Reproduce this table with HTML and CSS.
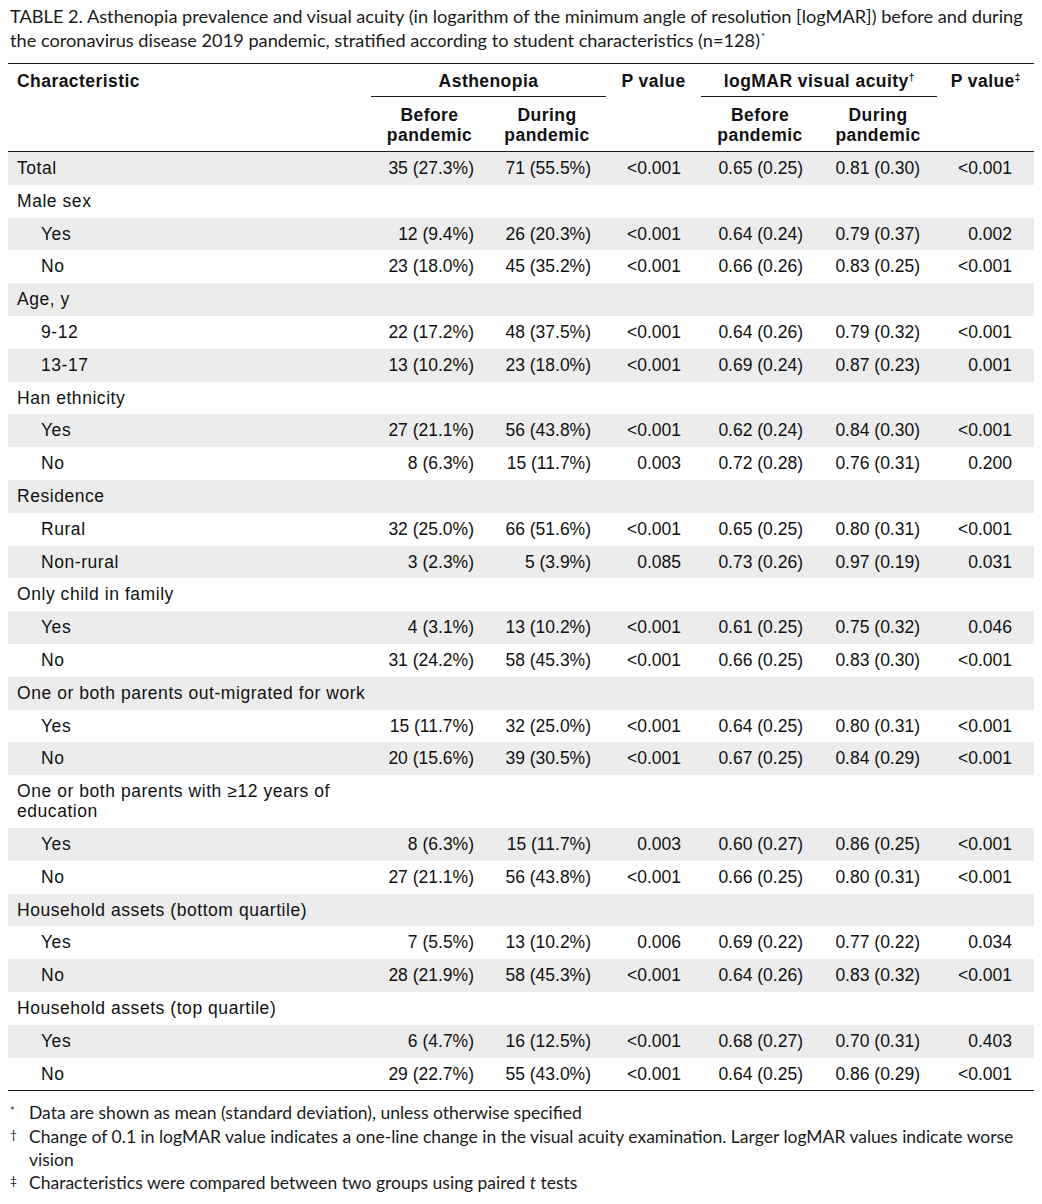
FILE: index.html
```html
<!DOCTYPE html>
<html lang="en">
<head>
<meta charset="utf-8">
<title>Table 2</title>
<link rel="stylesheet" href="styles.css">
</head>
<body>
<div class="page">
  <p class="caption">TABLE 2. Asthenopia prevalence and visual acuity (in logarithm of the minimum angle of resolution [logMAR]) before and during the coronavirus disease 2019 pandemic, stratified according to student characteristics (n=128)<span class="cap-sup">*</span></p>
  <table class="data">
    <colgroup>
      <col class="c1"><col class="c2"><col class="c3"><col class="c4"><col class="c5"><col class="c6"><col class="c7">
    </colgroup>
    <thead>
      <tr class="h1">
        <th rowspan="2" class="th-left">Characteristic</th>
        <th colspan="2" class="th-group">Asthenopia</th>
        <th rowspan="2" class="th-top">P value</th>
        <th colspan="2" class="th-group">logMAR visual acuity<sup class="mk">†</sup></th>
        <th rowspan="2" class="th-top">P value<sup class="mk">‡</sup></th>
      </tr>
      <tr class="h2">
        <th>Before<br>pandemic</th>
        <th>During<br>pandemic</th>
        <th>Before<br>pandemic</th>
        <th>During<br>pandemic</th>
      </tr>
    </thead>
    <tbody>
      <tr><td class="lab">Total</td><td>35 (27.3%)</td><td>71 (55.5%)</td><td>&lt;0.001</td><td>0.65 (0.25)</td><td>0.81 (0.30)</td><td>&lt;0.001</td></tr>
      <tr><td class="lab" colspan="7">Male sex</td></tr>
      <tr><td class="lab sub">Yes</td><td>12 (9.4%)</td><td>26 (20.3%)</td><td>&lt;0.001</td><td>0.64 (0.24)</td><td>0.79 (0.37)</td><td>0.002</td></tr>
      <tr><td class="lab sub">No</td><td>23 (18.0%)</td><td>45 (35.2%)</td><td>&lt;0.001</td><td>0.66 (0.26)</td><td>0.83 (0.25)</td><td>&lt;0.001</td></tr>
      <tr><td class="lab" colspan="7">Age, y</td></tr>
      <tr><td class="lab sub">9-12</td><td>22 (17.2%)</td><td>48 (37.5%)</td><td>&lt;0.001</td><td>0.64 (0.26)</td><td>0.79 (0.32)</td><td>&lt;0.001</td></tr>
      <tr><td class="lab sub">13-17</td><td>13 (10.2%)</td><td>23 (18.0%)</td><td>&lt;0.001</td><td>0.69 (0.24)</td><td>0.87 (0.23)</td><td>0.001</td></tr>
      <tr><td class="lab" colspan="7">Han ethnicity</td></tr>
      <tr><td class="lab sub">Yes</td><td>27 (21.1%)</td><td>56 (43.8%)</td><td>&lt;0.001</td><td>0.62 (0.24)</td><td>0.84 (0.30)</td><td>&lt;0.001</td></tr>
      <tr><td class="lab sub">No</td><td>8 (6.3%)</td><td>15 (11.7%)</td><td>0.003</td><td>0.72 (0.28)</td><td>0.76 (0.31)</td><td>0.200</td></tr>
      <tr><td class="lab" colspan="7">Residence</td></tr>
      <tr><td class="lab sub">Rural</td><td>32 (25.0%)</td><td>66 (51.6%)</td><td>&lt;0.001</td><td>0.65 (0.25)</td><td>0.80 (0.31)</td><td>&lt;0.001</td></tr>
      <tr><td class="lab sub">Non-rural</td><td>3 (2.3%)</td><td>5 (3.9%)</td><td>0.085</td><td>0.73 (0.26)</td><td>0.97 (0.19)</td><td>0.031</td></tr>
      <tr><td class="lab" colspan="7">Only child in family</td></tr>
      <tr><td class="lab sub">Yes</td><td>4 (3.1%)</td><td>13 (10.2%)</td><td>&lt;0.001</td><td>0.61 (0.25)</td><td>0.75 (0.32)</td><td>0.046</td></tr>
      <tr><td class="lab sub">No</td><td>31 (24.2%)</td><td>58 (45.3%)</td><td>&lt;0.001</td><td>0.66 (0.25)</td><td>0.83 (0.30)</td><td>&lt;0.001</td></tr>
      <tr><td class="lab" colspan="7">One or both parents out-migrated for work</td></tr>
      <tr><td class="lab sub">Yes</td><td>15 (11.7%)</td><td>32 (25.0%)</td><td>&lt;0.001</td><td>0.64 (0.25)</td><td>0.80 (0.31)</td><td>&lt;0.001</td></tr>
      <tr><td class="lab sub">No</td><td>20 (15.6%)</td><td>39 (30.5%)</td><td>&lt;0.001</td><td>0.67 (0.25)</td><td>0.84 (0.29)</td><td>&lt;0.001</td></tr>
      <tr><td class="lab">One or both parents with ≥12 years of education</td><td></td><td></td><td></td><td></td><td></td><td></td></tr>
      <tr><td class="lab sub">Yes</td><td>8 (6.3%)</td><td>15 (11.7%)</td><td>0.003</td><td>0.60 (0.27)</td><td>0.86 (0.25)</td><td>&lt;0.001</td></tr>
      <tr><td class="lab sub">No</td><td>27 (21.1%)</td><td>56 (43.8%)</td><td>&lt;0.001</td><td>0.66 (0.25)</td><td>0.80 (0.31)</td><td>&lt;0.001</td></tr>
      <tr><td class="lab" colspan="7">Household assets (bottom quartile)</td></tr>
      <tr><td class="lab sub">Yes</td><td>7 (5.5%)</td><td>13 (10.2%)</td><td>0.006</td><td>0.69 (0.22)</td><td>0.77 (0.22)</td><td>0.034</td></tr>
      <tr><td class="lab sub">No</td><td>28 (21.9%)</td><td>58 (45.3%)</td><td>&lt;0.001</td><td>0.64 (0.26)</td><td>0.83 (0.32)</td><td>&lt;0.001</td></tr>
      <tr><td class="lab" colspan="7">Household assets (top quartile)</td></tr>
      <tr><td class="lab sub">Yes</td><td>6 (4.7%)</td><td>16 (12.5%)</td><td>&lt;0.001</td><td>0.68 (0.27)</td><td>0.70 (0.31)</td><td>0.403</td></tr>
      <tr><td class="lab sub">No</td><td>29 (22.7%)</td><td>55 (43.0%)</td><td>&lt;0.001</td><td>0.64 (0.25)</td><td>0.86 (0.29)</td><td>&lt;0.001</td></tr>
    </tbody>
  </table>
  <ul class="notes">
    <li><span class="nm nm-star">*</span><span>Data are shown as mean (standard deviation), unless otherwise specified</span></li>
    <li><span class="nm">†</span><span>Change of 0.1 in logMAR value indicates a one-line change in the visual acuity examination. Larger logMAR values indicate worse vision</span></li>
    <li><span class="nm">‡</span><span>Characteristics were compared between two groups using paired <i>t</i> tests</span></li>
  </ul>
</div>
</body>
</html>
```
FILE: styles.css
```css
html, body {
  margin: 0;
  padding: 0;
  background: #ffffff;
  color: #111111;
}

.page {
  width: 1026px;
  padding: 0 8px;
}

.caption {
  margin: 4px 0 0 2px;
  font-family: "Lato", "Open Sans", sans-serif;
  font-size: 18.2px;
  line-height: 24px;
  color: #1a1a1a;
}

.cap-sup {
  display: inline-block;
  font-size: 10px;
  line-height: 10px;
  vertical-align: top;
  margin-left: 1px;
  margin-top: 3px;
}

.data {
  width: 1026px;
  margin-top: 11px;
  border-collapse: collapse;
  table-layout: fixed;
  font-family: "Liberation Sans", Arial, sans-serif;
  font-size: 17.5px;
  color: #111111;
}

.c1 { width: 363px; }
.c2 { width: 117px; }
.c3 { width: 118px; }
.c4 { width: 95px; }
.c5 { width: 118px; }
.c6 { width: 118px; }
.c7 { width: 97px; }

.data thead tr.h1 {
  border-top: 1px solid #1a1a1a;
}

.data thead tr.h2 {
  border-bottom: 1px solid #1a1a1a;
}

.data th {
  font-weight: bold;
  text-align: center;
  vertical-align: top;
  line-height: 20px;
  letter-spacing: 0.45px;
  padding: 0;
}

.h1 th {
  padding-top: 7px;
  padding-bottom: 5px;
}

.h1 th.th-left {
  text-align: left;
  padding-left: 9px;
}

.h1 th.th-group {
  border-bottom: 1px solid #1a1a1a;
}

.h2 th {
  padding-top: 8px;
  padding-bottom: 6px;
}

.mk {
  font-size: 10px;
  line-height: 0;
  vertical-align: 6px;
  letter-spacing: 0;
}

.data tbody tr:nth-child(odd) {
  background: #ececec;
}

.data td {
  padding: 6px 0 6.8px 0;
  line-height: 20px;
  text-align: right;
  white-space: nowrap;
}

.data td:nth-child(2) { padding-right: 14px; }
.data td:nth-child(3) { padding-right: 15px; }
.data td:nth-child(4) { padding-right: 20px; }
.data td:nth-child(5) { padding-right: 16px; }
.data td:nth-child(6) { padding-right: 17px; }
.data td:nth-child(7) { padding-right: 22px; }

.data td.lab {
  text-align: left;
  padding-left: 9px;
  padding-right: 30px;
  white-space: normal;
  letter-spacing: 0.55px;
}

.data td.lab.sub {
  padding-left: 33px;
}

.data tbody tr:last-child {
  border-bottom: 1px solid #1a1a1a;
}

.notes {
  list-style: none;
  margin: 10px 0 0 0;
  padding: 0;
  font-family: "Lato", "Open Sans", sans-serif;
  font-size: 17.5px;
  line-height: 23.3px;
  color: #1a1a1a;
}

.notes li {
  display: flex;
  align-items: flex-start;
}

.nm {
  flex: 0 0 19px;
  padding-left: 2px;
  font-size: 12px;
  line-height: 20px;
}

.nm-star {
  font-size: 11px;
}
```
